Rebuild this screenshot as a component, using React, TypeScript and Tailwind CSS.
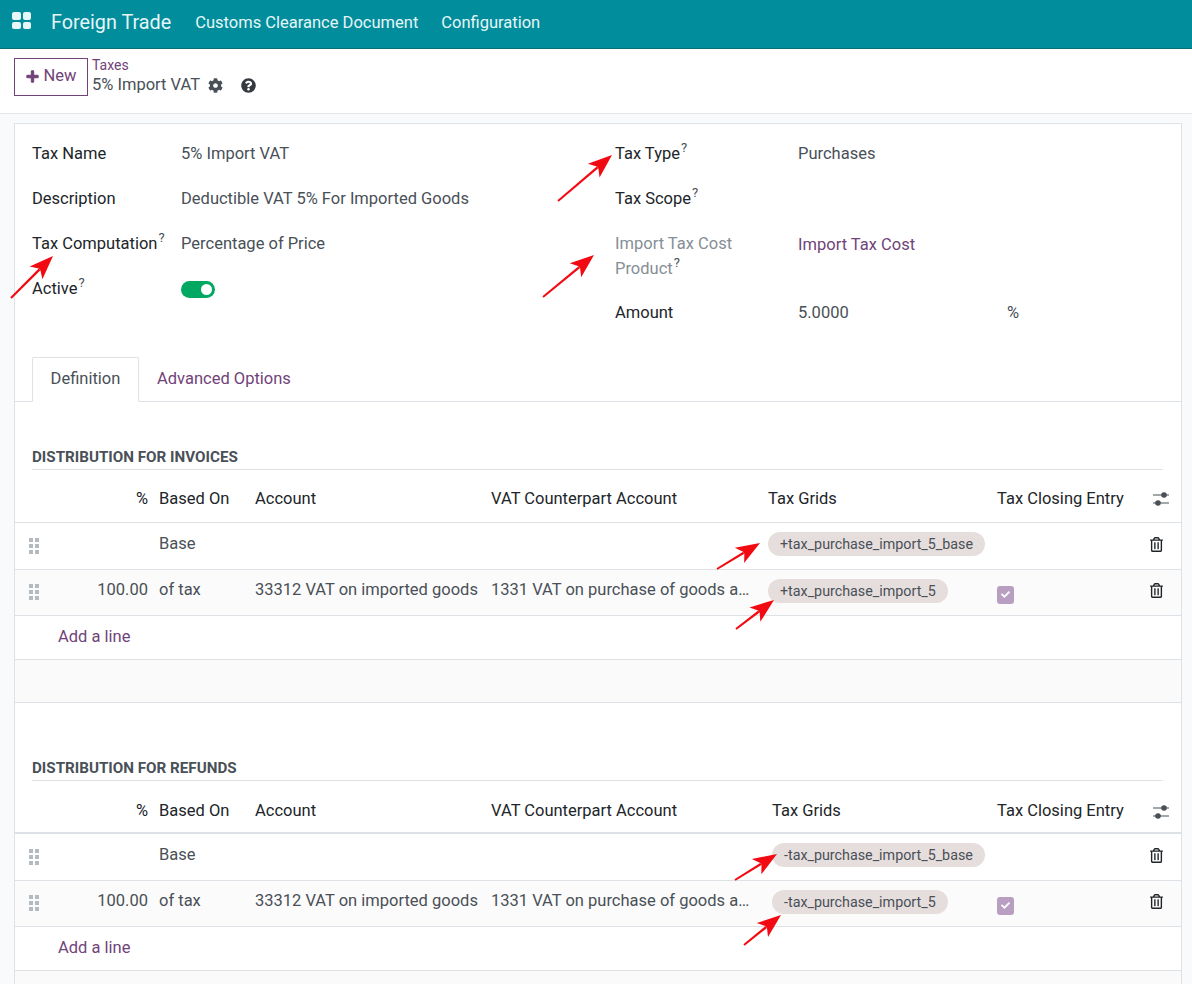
import { FaCog, FaPlus, FaQuestionCircle, FaRegTrashAlt, FaCheck } from "react-icons/fa";

const arrows = [
  [558, 201, 612, 155],
  [11, 298, 53, 256],
  [543, 297, 594, 255],
  [717, 569, 760, 543],
  [736, 629, 774, 600],
  [735, 880, 777, 854],
  [744, 945, 781, 915],
];

function Arrow({ pts }: { pts: number[] }) {
  const [x1, y1, x2, y2] = pts;
  const len = Math.hypot(x2 - x1, y2 - y1);
  const ux = (x2 - x1) / len;
  const uy = (y2 - y1) / len;
  const at = (back: number, side: number) =>
    `${x2 - ux * back - uy * side},${y2 - uy * back + ux * side}`;
  const tailA = `${x1 - uy},${y1 + ux}`;
  const tailB = `${x1 + uy},${y1 - ux}`;
  return (
    <g fill="#f20a12">
      <polygon points={`${tailA} ${at(19, 1.2)} ${at(19, -1.2)} ${tailB}`} />
      <polygon points={`${x2},${y2} ${at(24, 9)} ${at(19, 1.2)} ${at(19, -1.2)} ${at(24, -9)}`} />
    </g>
  );
}

function Help() {
  return <sup className="text-[13px] leading-none text-[#495057] top-[-7px] ml-[1px]">?</sup>;
}

function Grip() {
  return (
    <div className="grid grid-cols-2 gap-[2px] w-[10px]">
      {[0, 1, 2, 3, 4, 5].map((i) => (
        <span key={i} className="w-[4px] h-[4px] bg-[#b4bac0]" />
      ))}
    </div>
  );
}

function Sliders() {
  return (
    <svg width="18" height="16" viewBox="0 0 18 16" className="text-[#495057]">
      <path d="M1 4h16M1 12h16" stroke="currentColor" strokeWidth="1.2" />
      <circle cx="12" cy="4" r="2.8" fill="currentColor" />
      <circle cx="6" cy="12" r="2.8" fill="currentColor" />
    </svg>
  );
}

function Tag({ text }: { text: string }) {
  return (
    <span className="inline-flex items-center h-[24px] px-[12px] rounded-full bg-[#e6dedd] text-[14.3px] text-[#495057] leading-none whitespace-nowrap">
      {text}
    </span>
  );
}

function Check() {
  return (
    <span className="flex items-center justify-center w-[17px] h-[18px] rounded-[3px] bg-[#b89fc1] text-white">
      <FaCheck className="w-[9px] h-[9px]" />
    </span>
  );
}

function Trash() {
  return <FaRegTrashAlt className="w-[13px] h-[15px] text-[#212529]" />;
}

function DistTable({ title, sign, grid, truncated, headerLine, vatPad }: { title: string; sign: string; grid: string; truncated: string; headerLine: string; vatPad: string }) {
  return (
    <div>
      <div className="ml-[17px] mr-[18px] h-[28px] flex items-end pb-[4px] border-b border-[#dee2e6] text-[15.2px] font-bold text-[#495057] uppercase leading-none">
        {title}
      </div>
      <div className={`grid ${grid} h-[53px] items-center text-[#212529] ${headerLine}`}>
        <div className="text-right pr-[11px]">%</div>
        <div>Based On</div>
        <div>Account</div>
        <div>VAT Counterpart Account</div>
        <div>Tax Grids</div>
        <div className="whitespace-nowrap">Tax Closing Entry</div>
        <div className="flex justify-end pr-[11px]"><Sliders /></div>
      </div>
      <div className={`grid ${grid} h-[47px] items-center border-b border-[#dee2e6] text-[#495057]`}>
        <div className="pl-[14px] flex"><Grip /></div>
        <div className="mt-[-3px]">Base</div>
        <div />
        <div />
        <div className="mt-[-3px]"><Tag text={`${sign}tax_purchase_import_5_base`} /></div>
        <div />
        <div className="flex justify-end pr-[18px] mt-[-4px]"><Trash /></div>
      </div>
      <div className={`grid ${grid} h-[46px] items-center border-b border-[#dee2e6] bg-[#fcfbfb] text-[#495057]`}>
        <div className="pl-[14px] pr-[11px] flex justify-between items-center">
          <span className="mt-[-1px]"><Grip /></span>
          <span className="mt-[-5px]">100.00</span>
        </div>
        <div className="mt-[-5px]">of tax</div>
        <div className="mt-[-5px] whitespace-nowrap">33312 VAT on imported goods</div>
        <div className={`mt-[-5px] truncate ${vatPad}`}>{truncated}</div>
        <div className="mt-[-3px]"><Tag text={`${sign}tax_purchase_import_5`} /></div>
        <div className="mt-[4px]"><Check /></div>
        <div className="flex justify-end pr-[18px] mt-[-4px]"><Trash /></div>
      </div>
      <div className="h-[44px] pl-[43px] pt-[9px] text-[#71437a] border-b border-[#dee2e6]">Add a line</div>
    </div>
  );
}

export default function App() {
  return (
    <div className="relative w-[1192px] h-[984px] overflow-hidden bg-[#f9fafb] text-[16.5px] text-[#495057] font-['Roboto',sans-serif]">
      <header className="h-[49px] bg-[#018d9c] border-b border-[#0b6d78] flex items-center text-white">
        <div className="ml-[12px] grid grid-cols-2 gap-[2px] w-[19px] mt-[-7px]">
          <span className="h-[7.5px] bg-[#e9f6f7] rounded-[2px]" />
          <span className="h-[7.5px] bg-[#e9f6f7] rounded-[2px]" />
          <span className="h-[7.5px] bg-[#e9f6f7] rounded-[2px]" />
          <span className="h-[7.5px] bg-[#e9f6f7] rounded-[2px]" />
        </div>
        <div className="ml-[20px] text-[19.8px] text-[#e6f6f7] mt-[-2px]">Foreign Trade</div>
        <nav className="ml-[24px] flex gap-[23px] text-[#e6f6f7] mt-[-2px]">
          <span>Customs Clearance Document</span>
          <span>Configuration</span>
        </nav>
      </header>

      <div className="h-[65px] bg-white border-b border-[#e3e6ea] flex pl-[14px] pt-[8px]">
        <button className="mt-[1px] w-[74px] h-[38px] border border-[#71437a] text-[#71437a] flex items-center justify-center gap-[5px] bg-white pb-[2px]">
          <FaPlus className="w-[13px] h-[13px] [stroke-width:40]" />
          <span>New</span>
        </button>
        <div className="ml-[5px]">
          <div className="text-[14px] leading-[16px] text-[#71437a] ml-[-1px]">Taxes</div>
          <div className="flex items-center h-[22px] mt-[1px] ml-[-1px]">
            <span className="text-[#495057]">5% Import VAT</span>
            <FaCog className="ml-[8px] w-[15px] h-[15px]" />
            <FaQuestionCircle className="ml-[18px] w-[15px] h-[15px] text-[#343a40]" />
          </div>
        </div>
      </div>

      <main className="ml-[14px] w-[1168px] mt-[9px] bg-white border border-[#dee2e6] border-b-0">
        <section className="grid grid-cols-[583px_1fr] pl-[17px] pt-[18px] h-[233px]">
          <div className="grid grid-cols-[149px_1fr] auto-rows-[45px] content-start">
            <div className="text-[#212529] leading-[24px]">Tax Name</div>
            <div className="leading-[24px]">5% Import VAT</div>
            <div className="text-[#212529] leading-[24px]">Description</div>
            <div className="leading-[24px]">Deductible VAT 5% For Imported Goods</div>
            <div className="text-[#212529] leading-[24px] whitespace-nowrap">Tax Computation<Help /></div>
            <div className="leading-[24px]">Percentage of Price</div>
            <div className="text-[#212529] leading-[24px]">Active<Help /></div>
            <div className="pt-[4px]">
              <span className="flex items-center justify-end w-[34px] h-[17px] rounded-full bg-[#00a862] pr-[3px]">
                <span className="w-[11px] h-[11px] rounded-full bg-white" />
              </span>
            </div>
          </div>
          <div className="grid grid-cols-[183px_1fr] content-start">
            <div className="text-[#212529] h-[45px] leading-[24px]">Tax Type<Help /></div>
            <div className="leading-[24px]">Purchases</div>
            <div className="text-[#212529] h-[45px] leading-[24px]">Tax Scope<Help /></div>
            <div />
            <div className="text-[#868e96] h-[69px] leading-[25px] w-[140px] mt-[-1px] mb-[1px]">Import Tax Cost Product<Help /></div>
            <div className="text-[#71437a] leading-[26px]">Import Tax Cost</div>
            <div className="text-[#212529] leading-[24px]">Amount</div>
            <div className="flex leading-[24px]">
              <span className="w-[209px]">5.0000</span>
              <span>%</span>
            </div>
          </div>
        </section>

        <div className="h-[45px] flex border-b border-[#dee2e6] pl-[17px]">
          <div className="w-[107px] h-[45px] bg-white border border-[#dee2e6] border-b-white rounded-t-[2px] flex items-center justify-center">Definition</div>
          <div className="pl-[18px] flex items-center text-[#71437a]">Advanced Options</div>
        </div>

        <div className="h-[40px]" />
        <DistTable
          title="Distribution for invoices"
          sign="+"
          grid="grid-cols-[144px_96px_236px_277px_229px_148px_1fr]"
          truncated="1331 VAT on purchase of goods and services"
          headerLine="pt-[6px] border-b border-[#dee2e6]"
          vatPad="pr-[18px]"
        />
        <div className="h-[43px] bg-[#fafafa] border-b border-[#dee2e6]" />
        <div className="h-[50px]" />
        <DistTable
          title="Distribution for refunds"
          sign="-"
          grid="grid-cols-[144px_96px_236px_281px_225px_148px_1fr]"
          truncated="1331 VAT on purchase of goods and services"
          headerLine="pt-[10px] border-b-2 border-[#dee2e6]"
          vatPad="pr-[14px]"
        />
        <div className="h-[43px] bg-[#fafafa]" />
      </main>

      <svg className="absolute inset-0 pointer-events-none" width="1192" height="984">
        {arrows.map((a, i) => (
          <Arrow key={i} pts={a} />
        ))}
      </svg>
    </div>
  );
}
